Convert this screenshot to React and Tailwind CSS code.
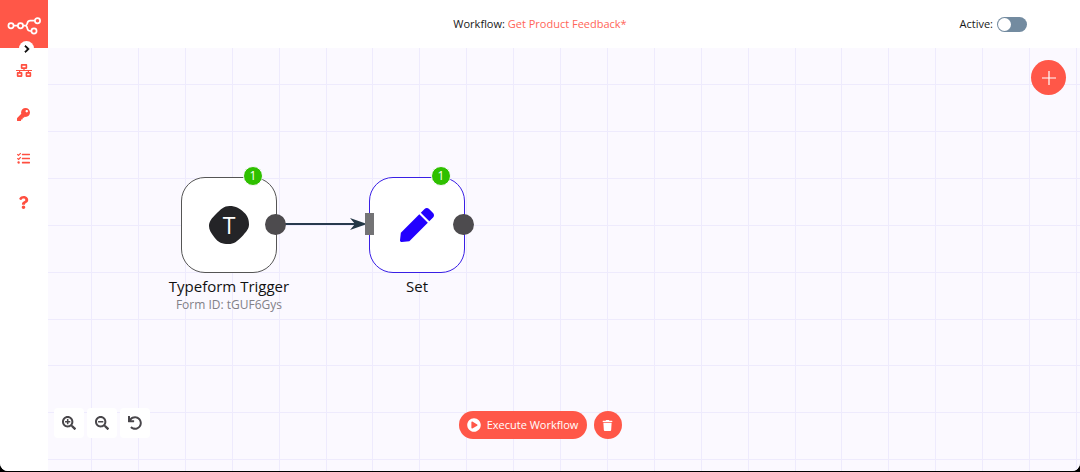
import React, { useState } from "react";
import {
  FaNetworkWired,
  FaKey,
  FaTasks,
  FaQuestion,
  FaChevronRight,
  FaSearchPlus,
  FaSearchMinus,
  FaUndo,
  FaPen,
  FaPlayCircle,
  FaTrash,
} from "react-icons/fa";

const gridLines = [0, 47, 94, 141, 188, 235, 281, 328, 375, 422];

function Grid() {
  return (
    <svg className="absolute inset-0 h-full w-full" aria-hidden="true">
      <defs>
        <pattern id="grid" x="43" y="36" width="469" height="469" patternUnits="userSpaceOnUse">
          {gridLines.map((p) => (
            <g key={p} fill="#eeebfd">
              <rect x={p} y="0" width="1" height="469" />
              <rect x="0" y={p} width="469" height="1" />
            </g>
          ))}
        </pattern>
      </defs>
      <rect width="100%" height="100%" fill="url(#grid)" />
    </svg>
  );
}

function Logo() {
  return (
    <svg viewBox="0 0 34 18" className="h-[18px] w-[34px]" fill="none" stroke="white" strokeWidth="1.7" aria-hidden="true">
      <circle cx="4" cy="8.7" r="2.6" />
      <circle cx="13.5" cy="8.7" r="2.6" />
      <circle cx="30.5" cy="3.7" r="2.6" />
      <circle cx="27" cy="14" r="2.6" />
      <path d="M6.600 8.700h4.300M16.100 8.700h2.200c1.600 0 1.700-1.300 2-2.500.4-1.600 1.200-2.500 2.900-2.500h4.700M18.300 8.700c1.600 0 1.700 1.300 2 2.700.4 1.700 1.200 2.600 2.900 2.600h1.200" />
    </svg>
  );
}

function Sidebar() {
  const items = [
    { label: "Workflows", Icon: FaNetworkWired },
    { label: "Credentials", Icon: FaKey },
    { label: "Executions", Icon: FaTasks },
    { label: "Help", Icon: FaQuestion },
  ];
  return (
    <aside className="relative flex w-12 shrink-0 flex-col bg-white">
      <a href="#" aria-label="Home" className="flex h-12 items-center justify-center bg-[#ff5748] pt-1">
        <Logo />
      </a>
      <button
        aria-label="Expand menu"
        className="absolute top-[41px] left-[19px] flex size-[15px] items-center justify-center rounded-full bg-white text-black"
      >
        <FaChevronRight className="size-2" stroke="currentColor" strokeWidth="50" />
      </button>
      <nav className="flex flex-col items-center text-[#ff4f40]">
        {items.map(({ label, Icon }) => (
          <a key={label} href="#" aria-label={label} className="flex h-11 w-full items-center justify-center pt-px pr-px">
            <Icon className={Icon === FaNetworkWired ? "h-[13px] w-4" : "size-[13px]"} />
          </a>
        ))}
      </nav>
    </aside>
  );
}

function Header() {
  const [active, setActive] = useState(false);
  return (
    <header className="grid h-12 shrink-0 grid-cols-[1fr_auto_1fr] items-center bg-white pt-px pr-[53px] pl-[5px] text-[11px]">
      <span />
      <div className="whitespace-nowrap">
        Workflow:{" "}
        <a href="#" className="text-[#ff6558]">
          Get Product Feedback*
        </a>
      </div>
      <label className="flex items-center gap-1 justify-self-end">
        Active:
        <input
          type="checkbox"
          role="switch"
          checked={active}
          onChange={() => setActive(!active)}
          className="h-[15px] w-[30px] appearance-none rounded-full bg-[#738ba0] p-px before:block before:size-[13px] before:rounded-full before:bg-white before:content-[''] checked:bg-[#13ce66] checked:before:ml-[15px]"
        />
      </label>
    </header>
  );
}

function Node({ title, subtitle, position, border, children, input }) {
  return (
    <section className={`absolute flex w-40 flex-col items-center ${position}`}>
      <div className={`relative flex size-24 items-center justify-center rounded-3xl border bg-white ${border}`}>
        {children}
        <span className="absolute -top-3 right-[13px] flex size-5 items-center justify-center rounded-full border border-[#fbf9ff] bg-[#2fc000] text-xs leading-none font-medium text-white">
          1
        </span>
        {input && <span className="absolute top-[35px] -left-[5px] h-[22px] w-[9px] bg-[#737375]" />}
        <span className="absolute top-[36px] -right-[10px] size-[21px] rounded-full bg-[#4d4b4e]" />
      </div>
      <h2 className="mt-[3px] text-[15px] leading-5 whitespace-nowrap text-[#111]">{title}</h2>
      {subtitle && <p className="text-xs leading-[18px] whitespace-nowrap text-[#828087]">{subtitle}</p>}
    </section>
  );
}

function Canvas() {
  const zoomButtons = [
    { label: "Zoom in", Icon: FaSearchPlus },
    { label: "Zoom out", Icon: FaSearchMinus },
    { label: "Reset zoom", Icon: FaUndo },
  ];
  return (
    <main className="relative flex-1 overflow-hidden bg-[#fbf9ff]">
      <Grid />
      <svg className="absolute top-[168px] left-[236px] h-4 w-[84px]" viewBox="0 0 84 16" aria-hidden="true">
        <path d="M0 8h76" stroke="#273a4d" strokeWidth="2" />
        <path d="M83 8 66 2l5 6-5 6z" fill="#233746" />
      </svg>
      <Node
        title="Typeform Trigger"
        subtitle="Form ID: tGUF6Gys"
        position="top-[129px] left-[101px]"
        border="border-[#555]"
      >
        <div className="relative flex h-[38px] w-10 items-center justify-center">
          <svg viewBox="0 0 40 38" className="absolute inset-0 h-[38px] w-10" aria-hidden="true">
            <path
              d="M20.500 0C27 0 31 2.500 35 6.500C39 10 40 14 40 18.500C40 23 37 26 33 30.500C28 35.500 25 38 19.500 38C13 38 9.500 36.500 5.500 31.500C2 27 0 24 0 20C0 15.500 3 12 7 8C12 3 15 0 20.500 0Z"
              fill="#242427"
            />
          </svg>
          <span className="relative text-[23px] leading-none font-medium text-white">T</span>
        </div>
      </Node>
      <Node title="Set" position="top-[129px] left-[289px]" border="border-[#3a20e5]" input>
        <FaPen className="size-[34px] text-[#2200ff]" />
      </Node>
      <button
        aria-label="Add node"
        className="absolute top-3 right-[14px] flex size-[35px] items-center justify-center rounded-full bg-[#ff5748]"
      >
        <svg viewBox="0 0 14 14" className="size-[14px]" stroke="white" strokeWidth="1.2" aria-hidden="true">
          <path d="M7 0v14M0 7h14" />
        </svg>
      </button>
      <div className="absolute bottom-[33px] left-[6px] flex gap-[3px]">
        {zoomButtons.map(({ label, Icon }) => (
          <button key={label} aria-label={label} className="flex size-[30px] items-center justify-center rounded-sm bg-white text-[#48464a]">
            <Icon className="size-[14px]" />
          </button>
        ))}
      </div>
      <div className="pointer-events-none absolute inset-x-0 bottom-8 flex justify-center gap-[7px] pr-12 text-white">
        <button className="pointer-events-auto flex h-7 w-32 items-center justify-center gap-[6px] rounded-full bg-[#ff5748] text-[11px] font-medium whitespace-nowrap">
          <FaPlayCircle className="size-[14px]" />
          Execute Workflow
        </button>
        <button
          aria-label="Delete execution data"
          className="pointer-events-auto flex size-7 items-center justify-center rounded-full bg-[#ff5748]"
        >
          <FaTrash className="size-[11px]" />
        </button>
      </div>
    </main>
  );
}

export default function App() {
  return (
    <div className="h-screen bg-black pb-px font-['Open_Sans','Noto_Sans',sans-serif] text-[#171717]">
      <div className="flex h-full overflow-hidden rounded-b-lg bg-white">
        <Sidebar />
        <div className="flex min-w-0 flex-1 flex-col">
          <Header />
          <Canvas />
        </div>
      </div>
    </div>
  );
}
